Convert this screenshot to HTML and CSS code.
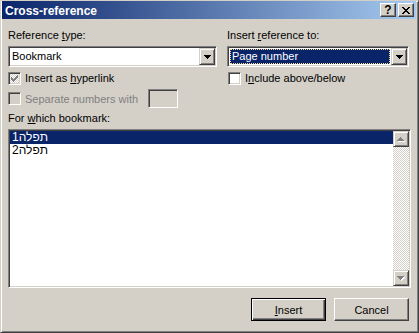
FILE: index.html
```html
<!DOCTYPE html>
<html lang="en">
<head>
    <meta charset="UTF-8">
    <title>Cross-reference</title>
    <link rel="stylesheet" href="styles.css">
</head>
<body>
    <div class="window">
        <div class="titlebar">
            <span class="title">Cross-reference</span>
            <div class="caption-buttons">
                <span class="cap-btn help">?</span>
                <span class="cap-btn close">
                    <svg width="8" height="7" viewBox="0 0 8 7" shape-rendering="crispEdges"><path d="M0 0h2v1h-2z M6 0h2v1h-2z M1 1h2v1h-2z M5 1h2v1h-2z M2 2h4v1h-4z M3 3h2v1h-2z M2 4h4v1h-4z M1 5h2v1h-2z M5 5h2v1h-2z M0 6h2v1h-2z M6 6h2v1h-2z" fill="#000"/></svg>
                </span>
            </div>
        </div>

        <div class="content">
            <div class="top-grid">
                <div class="field">
                    <div class="label">Reference <u>t</u>ype:</div>
                    <div class="combo">
                        <div class="combo-value">Bookmark</div>
                        <div class="combo-btn">
                            <svg width="7" height="4" viewBox="0 0 7 4" shape-rendering="crispEdges"><path d="M0 0h7v1h-1v1h-1v1h-1v1h-1v-1h-1v-1h-1v-1h-1z" fill="#000"/></svg>
                        </div>
                    </div>
                    <div class="check">
                        <span class="box box-mixed">
                            <svg width="7" height="7" viewBox="0 0 7 7" shape-rendering="crispEdges"><path d="M0 2h1v3h-1z M1 3h1v3h-1z M2 4h1v3h-1z M3 3h1v3h-1z M4 2h1v3h-1z M5 1h1v3h-1z M6 0h1v3h-1z" fill="#808080"/></svg>
                        </span>
                        <span>Insert as <u>h</u>yperlink</span>
                    </div>
                </div>
                <div class="field">
                    <div class="label">Insert <u>r</u>eference to:</div>
                    <div class="combo">
                        <div class="combo-value selected"><span class="focus">Page number</span></div>
                        <div class="combo-btn">
                            <svg width="7" height="4" viewBox="0 0 7 4" shape-rendering="crispEdges"><path d="M0 0h7v1h-1v1h-1v1h-1v1h-1v-1h-1v-1h-1v-1h-1z" fill="#000"/></svg>
                        </div>
                    </div>
                    <div class="check check-right">
                        <span class="box"></span>
                        <span>I<u>n</u>clude above/below</span>
                    </div>
                </div>
            </div>

            <div class="sep-row">
                <span class="box box-disabled"></span>
                <span class="disabled-text">Separate numbers with</span>
                <span class="sep-input"></span>
            </div>

            <div class="label label-list">For <u>w</u>hich bookmark:</div>
            <div class="listbox">
                <div class="list-items">
                    <div class="item selected">תפלה1</div>
                    <div class="item">תפלה2</div>
                </div>
                <div class="scrollbar">
                    <div class="sb-btn">
                        <svg width="8" height="5" viewBox="0 0 8 5" shape-rendering="crispEdges"><path d="M4 1h1v1h1v1h1v1h1v1h-7v-1h1v-1h1v-1h1z" fill="#fff"/><path d="M3 0h1v1h1v1h1v1h1v1h-7v-1h1v-1h1v-1h1z" fill="#808080"/></svg>
                    </div>
                    <div class="sb-track"></div>
                    <div class="sb-btn">
                        <svg width="8" height="5" viewBox="0 0 8 5" shape-rendering="crispEdges"><path d="M1 1h7v1h-1v1h-1v1h-1v1h-1v-1h-1v-1h-1v-1h-1z" fill="#fff"/><path d="M0 0h7v1h-1v1h-1v1h-1v1h-1v-1h-1v-1h-1v-1h-1z" fill="#808080"/></svg>
                    </div>
                </div>
            </div>

            <div class="buttons">
                <div class="btn btn-default"><u>I</u>nsert</div>
                <div class="btn">Cancel</div>
            </div>
        </div>
    </div>
</body>
</html>
```

FILE: styles.css
```css
body {
    margin: 0;
    background-color: #d4d0c8;
    font-family: "Liberation Sans", Arial, sans-serif;
    font-size: 11px;
    color: #000;
}
.window {
    width: 419px;
    height: 333px;
    box-sizing: border-box;
    border-top: 1px solid #d4d0c8;
    border-left: 1px solid #d4d0c8;
    border-right: 1px solid #404040;
    border-bottom: 1px solid #404040;
    box-shadow: inset 1px 1px #fff, inset -1px -1px #808080;
    padding: 0 2px 0 1px;
}
.titlebar {
    height: 18px;
    display: flex;
    align-items: flex-start;
    background: linear-gradient(to right, #0a246a, #a6caf0);
    padding: 0 2px 0 3px;
}
.title {
    color: #fff;
    font-weight: bold;
    font-size: 12px;
    line-height: 14px;
    margin-top: 3px;
}
.caption-buttons {
    margin-left: auto;
    margin-top: 2px;
    display: flex;
    gap: 2px;
}
.cap-btn {
    width: 16px;
    height: 14px;
    box-sizing: border-box;
    border: 1px solid;
    border-color: #fff #404040 #404040 #fff;
    box-shadow: inset -1px -1px #808080;
    background-color: #d4d0c8;
    display: flex;
    align-items: center;
    justify-content: center;
}
.help {
    font-weight: bold;
    font-size: 12px;
    line-height: 12px;
}
.content {
    padding: 10px 0 0 6px;
    width: 403px;
}
.top-grid {
    display: grid;
    grid-template-columns: 209px 182px;
    column-gap: 10px;
}
.label {
    line-height: 13px;
    margin-bottom: 4px;
}
.combo {
    height: 21px;
    box-sizing: border-box;
    border: 1px solid;
    border-color: #808080 #fff #fff #808080;
    box-shadow: inset 1px 1px #404040, inset -1px -1px #d4d0c8;
    padding: 1px;
    background-color: #fff;
    display: flex;
}
.combo-value {
    flex: 1;
    margin: 1px;
    padding-left: 1px;
    line-height: 15px;
    display: flex;
}
.combo-value.selected {
    background-color: #0a246a;
    color: #fff;
    padding-left: 0;
}
.focus {
    flex: 1;
    border: 1px dotted #f5db95;
    line-height: 13px;
    padding-left: 1px;
}
.combo-btn {
    width: 16px;
    height: 17px;
    box-sizing: border-box;
    border: 1px solid;
    border-color: #d4d0c8 #404040 #404040 #d4d0c8;
    box-shadow: inset 1px 1px #fff, inset -1px -1px #808080;
    background-color: #d4d0c8;
    display: flex;
    align-items: center;
    justify-content: center;
}
.check {
    display: flex;
    align-items: center;
    gap: 4px;
    margin-top: 5px;
    line-height: 13px;
}
.check-right {
    margin-left: 1px;
}
.box {
    width: 13px;
    height: 13px;
    box-sizing: border-box;
    border: 1px solid;
    border-color: #808080 #fff #fff #808080;
    box-shadow: inset 1px 1px #404040, inset -1px -1px #d4d0c8;
    background-color: #fff;
    flex-shrink: 0;
    display: flex;
    align-items: center;
    justify-content: center;
}
.box-mixed {
    background: repeating-conic-gradient(#fff 0 25%, #d4d0c8 0 50%) 0 0 / 2px 2px;
}
.box-disabled {
    background-color: #d4d0c8;
}
.sep-row {
    display: flex;
    align-items: center;
    gap: 4px;
    height: 19px;
    margin-top: 4px;
}
.disabled-text {
    color: #808080;
}
.sep-input {
    width: 30px;
    height: 19px;
    box-sizing: border-box;
    margin-left: 6px;
    border: 1px solid;
    border-color: #808080 #fff #fff #808080;
    box-shadow: inset 1px 1px #404040, inset -1px -1px #d4d0c8;
    background-color: #d4d0c8;
}
.label-list {
    margin-top: 4px;
}
.listbox {
    height: 159px;
    box-sizing: border-box;
    border: 1px solid;
    border-color: #808080 #fff #fff #808080;
    box-shadow: inset 1px 1px #404040, inset -1px -1px #d4d0c8;
    padding: 1px;
    background-color: #fff;
    display: flex;
}
.list-items {
    flex: 1;
}
.item {
    height: 13px;
    line-height: 13px;
    padding-left: 2px;
    font-size: 12px;
}
.item.selected {
    background-color: #0a246a;
    color: #fff;
}
.scrollbar {
    width: 16px;
    display: flex;
    flex-direction: column;
}
.sb-btn {
    height: 16px;
    box-sizing: border-box;
    border: 1px solid;
    border-color: #d4d0c8 #404040 #404040 #d4d0c8;
    box-shadow: inset 1px 1px #fff, inset -1px -1px #808080;
    background-color: #d4d0c8;
    display: flex;
    align-items: center;
    justify-content: center;
}
.sb-track {
    flex: 1;
    background: repeating-conic-gradient(#fff 0 25%, #d4d0c8 0 50%) 0 0 / 2px 2px;
}
.buttons {
    display: flex;
    justify-content: flex-end;
    gap: 8px;
    margin-top: 10px;
    padding-right: 2px;
}
.btn {
    width: 75px;
    height: 23px;
    box-sizing: border-box;
    border: 1px solid;
    border-color: #fff #404040 #404040 #fff;
    box-shadow: inset -1px -1px #808080;
    display: flex;
    align-items: center;
    justify-content: center;
}
.btn-default {
    border: 1px solid #000;
    box-shadow: inset 1px 1px #fff, inset -1px -1px #404040, inset -2px -2px #808080;
}
```
